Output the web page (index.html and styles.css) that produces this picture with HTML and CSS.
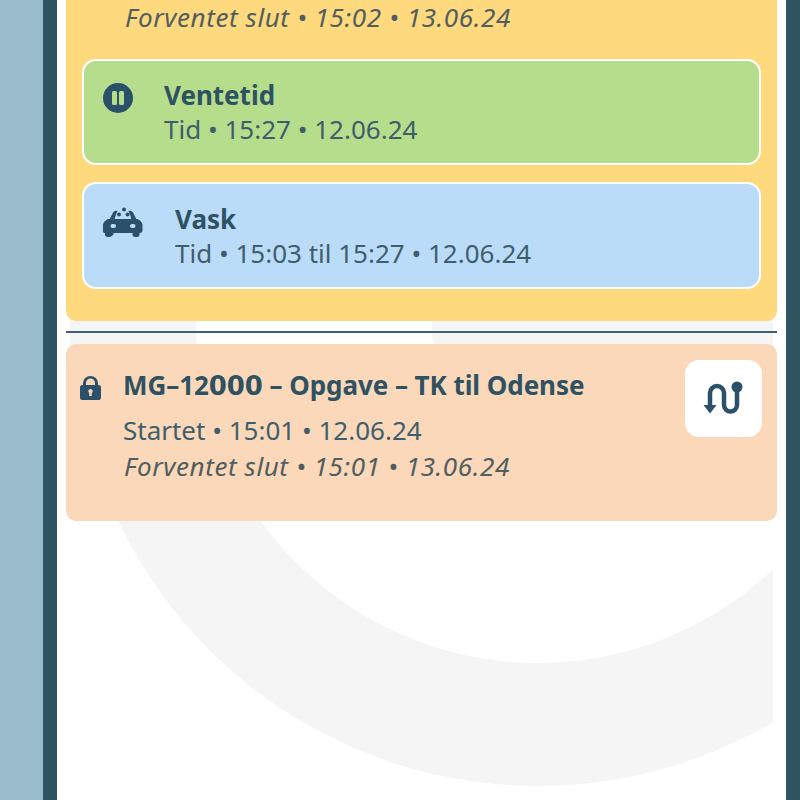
FILE: index.html
```html
<!DOCTYPE html>
<html lang="da">
<head>
<meta charset="utf-8">
<title>Opgaver</title>
<link rel="stylesheet" href="styles.css">
</head>
<body>
<div class="page">
  <aside class="rail"></aside>
  <main class="panel">
    <svg class="watermark" viewBox="57 0 729 800" aria-hidden="true">
      <defs><clipPath id="wm"><rect x="70" y="0" width="703" height="800"/></clipPath></defs>
      <g clip-path="url(#wm)">
        <path fill-rule="evenodd" d="M73 321a465 465 0 1 0 930 0a465 465 0 1 0 -930 0ZM196 321a342 342 0 1 0 684 0a342 342 0 1 0 -684 0Z"/>
        <path d="M70 300H196V350H70Z"/>
        <path d="M432 300V335Q433 346 440 350H780V300Z"/>
      </g>
    </svg>
    <div class="content">
      <section class="card card-yellow">
        <p class="line line-em first">Forventet slut • 15:02 • 13.06.24</p>
        <div class="sub sub-green">
          <svg class="ico ico-pause" viewBox="0 0 30 30"><path fill-rule="evenodd" d="M15 0a15 15 0 1 0 0 30a15 15 0 1 0 0-30ZM9 9.500a1.500 1.500 0 0 1 1.500-1.500h2a1.500 1.500 0 0 1 1.500 1.500v11a1.500 1.500 0 0 1-1.500 1.500h-2a1.500 1.500 0 0 1-1.500-1.500ZM16 9.500a1.500 1.500 0 0 1 1.500-1.500h2a1.500 1.500 0 0 1 1.500 1.500v11a1.500 1.500 0 0 1-1.500 1.500h-2a1.500 1.500 0 0 1-1.500-1.500Z"/></svg>
          <div class="sub-text">
            <h3 class="sub-title">Ventetid</h3>
            <p class="line">Tid • 15:27 • 12.06.24</p>
          </div>
        </div>
        <div class="sub sub-blue">
          <svg class="ico ico-car" viewBox="0 0 40 30"><path d="M10 5.500c1-1.500 3-2 4.500-1.500l-1.800 4.500c-.5 1.300-.6 2.300-1 3.500h16.600c-.4-1.200-.5-2.200-1-3.500L25.500 4c1.500-.5 3.500 0 4.500 1.500l3.300 6.500h1.200c2.500 1 4.500 3 5 5.500v6c0 1.300-1 2.500-2.500 2.500h-.5v1.500c0 1.400-1 2.500-2.500 2.500h-2c-1.500 0-2.500-1.100-2.500-2.500V26h-19v1.500C9 28.900 8 30 6.500 30h-2C3 30 2 28.900 2 27.500V26h-.5C0 26 0 24.800 0 23.500v-6c.5-2.500 2.500-4.500 5-5.500h1.700Z M9.500 17a2 2 0 1 0 0 4h1.500a2 2 0 1 0 0-4ZM29 17a2 2 0 1 0 0 4h1.500a2 2 0 1 0 0-4Z" fill-rule="evenodd"/><circle cx="16" cy="7.500" r="2"/><circle cx="21" cy="2.500" r="2"/><circle cx="24.500" cy="7.500" r="2"/></svg>
          <div class="sub-text">
            <h3 class="sub-title">Vask</h3>
            <p class="line">Tid • 15:03 til 15:27 • 12.06.24</p>
          </div>
        </div>
      </section>
      <hr class="rule">
      <section class="card card-peach">
        <svg class="ico ico-lock" viewBox="0 0 21 24"><path fill-rule="evenodd" d="M3 9V7a7.500 7 0 0 1 15 0v2h.5A2.500 2.500 0 0 1 21 11.500v10a2.500 2.500 0 0 1-2.500 2.500h-16A2.500 2.500 0 0 1 0 21.500v-10A2.500 2.500 0 0 1 2.500 9ZM6 9h9V7a4.500 4.500 0 0 0-9 0ZM10.500 13a2.200 2.200 0 0 0-1.300 4v3h2.600v-3a2.200 2.200 0 0 0-1.300-4Z"/></svg>
        <div class="task-text">
          <h2 class="task-title">MG–12<span class="zeros">000</span> – Opgave – TK til Odense</h2>
          <p class="line">Startet • 15:01 • 12.06.24</p>
          <p class="line line-em">Forventet slut • 15:01 • 13.06.24</p>
        </div>
        <button class="route-btn" type="button" aria-label="Rute">
          <svg class="ico-route" viewBox="0 0 56 56"><path class="route-line" d="M14 36V22a7 7 0 0 1 14 0V34a6.500 6.500 0 0 0 13 0V16"/><circle cx="41" cy="16" r="5.500"/><path d="M7.500 34h13L14 42.500Z"/></svg>
        </button>
      </section>
    </div>
  </main>
</div>
</body>
</html>
```
FILE: styles.css
```css
* { box-sizing: border-box; }
html, body { margin: 0; height: 100%; overflow: hidden; background: #fff; }
body { font-family: "Noto Sans", "Open Sans", sans-serif; color: #2f5263; }
.page { display: flex; height: 800px; }
.rail { width: 43px; flex: none; background: #9abccb; }
.panel {
  position: relative;
  flex: 1;
  background: #fff;
  border-left: 14px solid #2f5563;
  border-right: 14px solid #2f5563;
  overflow: hidden;
}
.watermark { position: absolute; left: 0; top: 0; width: 729px; height: 800px; fill: #f5f5f5; }
.content { position: relative; padding: 0 9px; }
.card { border-radius: 0 0 10px 10px; }
.card-yellow { background: #ffd97e; padding: 0 16px 32px; }
.line.first { margin: 0 0 23px; padding-left: 43px; line-height: 34px; height: 36px; }
.sub {
  display: flex;
  border: 2px solid #fff;
  border-radius: 14px;
  height: 107px;
  margin-bottom: 17px;
  padding: 0 0 0 19px;
}
.sub:last-child { margin-bottom: 0; }
.sub-green { background: #b5dd8c; height: 106px; }
.sub-blue { background: #bbdcf9; }
.sub-text { padding-top: 18px; }
.sub-blue .sub-text { padding-top: 19px; }
.sub-title, .task-title {
  margin: 0;
  font-family: "Noto Sans", sans-serif;
  font-weight: 700;
  font-size: 26px;
  line-height: 32px;
  color: #2f5263;
}
.zeros { font-family: "DejaVu Sans", sans-serif; }
.line { margin: 0; font-size: 26px; line-height: 37px; color: #3f5e6c; white-space: nowrap; }
.line-em { font-style: italic; color: #505e60; letter-spacing: .6px; }
.ico { flex: none; fill: #2b5069; }
.ico-pause { width: 30px; height: 30px; margin: 22px 31px 0 0; }
.ico-car { width: 40px; height: 30px; margin: 23px 32px 0 0; }
.rule { margin: 10px 0 11px; border: 0; height: 2px; background: #3f5f72; }
.card-peach {
  display: flex;
  height: 177px;
  background: #fad8b9;
  border-radius: 10px;
  padding: 16px 15px 0 14px;
}
.ico-lock { width: 21px; height: 24px; margin: 16px 22px 0 0; }
.task-text { flex: 1; }
.task-title { margin-bottom: 1px; line-height: 50px; letter-spacing: -.06px; }
.task-text .line { line-height: 36px; }
.task-text .line-em { padding-left: 1px; }
.route-btn {
  flex: none;
  width: 77px;
  height: 77px;
  padding: 0;
  border: 0;
  border-radius: 14px;
  background: #fff;
  display: flex;
  align-items: center;
  justify-content: center;
}
.ico-route { width: 56px; height: 56px; fill: #2b5069; }
.route-line { fill: none; stroke: #2b5069; stroke-width: 4.5; }
```
